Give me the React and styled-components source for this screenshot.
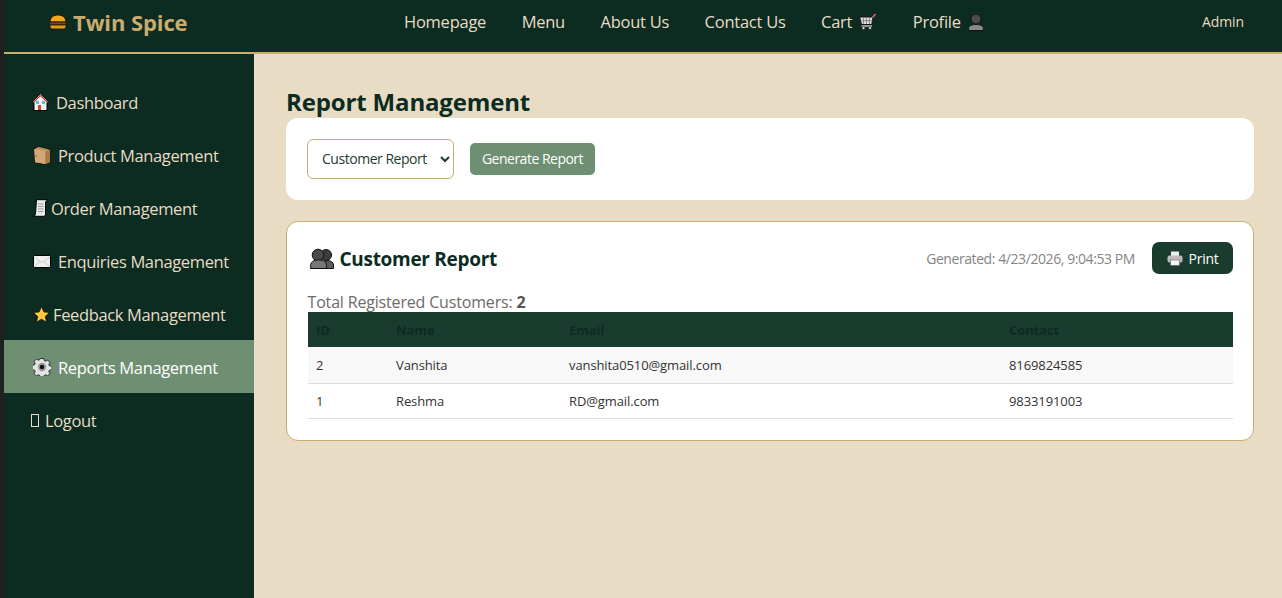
import React from "react";
import styled, { createGlobalStyle } from "styled-components";

const GlobalStyle = createGlobalStyle`
  html, body { margin: 0; padding: 0; height: 100%; }
  body {
    background: #202020;
    font-family: "Open Sans", "Noto Sans", "Liberation Sans", sans-serif;
    overflow: hidden;
  }
  svg { flex: none; display: block; }
`;

const Page = styled.div`
  margin-left: 4px;
  height: 598px;
  display: flex;
  flex-direction: column;
  background: #e8dcc5;
`;

const TopBar = styled.header`
  height: 54px;
  flex: none;
  box-sizing: border-box;
  background: #0c2b21;
  border-bottom: 2px solid #c8ad6e;
  padding-bottom: 9px;
  display: flex;
  align-items: center;
`;

const Brand = styled.div`
  width: 400px;
  box-sizing: border-box;
  padding-left: 45px;
  display: flex;
  align-items: center;
  gap: 6px;
  color: #c8ad6e;
  font-size: 22px;
  font-weight: 700;
  letter-spacing: -0.1px;
`;

const TopLinks = styled.nav`
  display: flex;
  align-items: center;
  gap: 35.5px;
  color: #e8dcc5;
  font-size: 16.5px;
  letter-spacing: -0.25px;
`;

const TopLink = styled.span`
  display: flex;
  align-items: center;
  gap: 7px;
  margin-left: ${(p) => p.$push || 0}px;
`;

const AdminLabel = styled.span`
  margin-left: auto;
  margin-right: 38px;
  color: #e8dcc5;
  font-size: 14px;
  letter-spacing: -0.1px;
`;

const Body = styled.div`
  flex: 1;
  display: flex;
  min-height: 0;
`;

const Sidebar = styled.aside`
  width: 250px;
  flex: none;
  background: #0c2b21;
  padding-top: 21px;
  box-sizing: border-box;
`;

const SideItem = styled.div`
  height: 53px;
  box-sizing: border-box;
  padding: 1px 0 0 ${(p) => p.$indent || 28}px;
  display: flex;
  align-items: center;
  gap: ${(p) => p.$gap}px;
  color: ${(p) => (p.$active ? "#ffffff" : "#e8dcc5")};
  background: ${(p) => (p.$active ? "#6e8f72" : "transparent")};
  font-size: 16.5px;
  letter-spacing: -0.36px;
`;

const Main = styled.main`
  flex: 1;
  padding: 32px 28px 0 32px;
  min-width: 0;
`;

const Title = styled.h1`
  margin: 0;
  color: #0c2b21;
  font-size: 24px;
  line-height: 32px;
  font-weight: 700;
  letter-spacing: -0.15px;
`;

const Controls = styled.section`
  height: 82px;
  box-sizing: border-box;
  background: #fff;
  border-radius: 12px;
  padding: 0 21px;
  display: flex;
  align-items: center;
  gap: 16px;
`;

const ReportSelect = styled.select`
  width: 147px;
  height: 40px;
  box-sizing: border-box;
  padding: 0 10px 1px;
  background: #fff;
  border: 1px solid #c8ad6e;
  border-radius: 6px;
  color: #1f3b30;
  font-family: inherit;
  font-size: 14px;
  letter-spacing: -0.47px;
`;

const GenerateButton = styled.button`
  width: 125px;
  height: 32px;
  padding: 0 0 1px;
  border: 0;
  border-radius: 5px;
  background: #6e8f72;
  color: #fff;
  font-family: inherit;
  font-size: 14px;
  letter-spacing: -0.5px;
`;

const ReportCard = styled.section`
  margin-top: 21px;
  height: 220px;
  box-sizing: border-box;
  background: #fff;
  border: 1px solid #c8ad6e;
  border-radius: 12px;
  padding: 20px 20px 0 20.500px;
`;

const CardHeader = styled.div`
  height: 32px;
  display: flex;
  align-items: center;
`;

const CardTitle = styled.h2`
  margin: 1px 0 0 2px;
  display: flex;
  align-items: center;
  gap: 6px;
  color: #0c2b21;
  font-size: 19px;
  font-weight: 700;
  letter-spacing: -0.3px;
`;

const Generated = styled.span`
  margin-left: auto;
  margin-right: 17px;
  color: #858585;
  font-size: 14px;
  letter-spacing: -0.42px;
`;

const PrintButton = styled.button`
  width: 81px;
  height: 32px;
  border: 0;
  border-radius: 7px;
  background: #1a3c2f;
  color: #fff;
  font-family: inherit;
  font-size: 14px;
  letter-spacing: -0.3px;
  display: flex;
  align-items: center;
  justify-content: center;
  gap: 6px;
`;

const TotalLine = styled.p`
  margin: 18px 0 -1px;
  color: #6b6b6b;
  font-size: 16px;
  line-height: 21px;
  letter-spacing: -0.17px;

  strong {
    color: #555;
  }
`;

const Table = styled.table`
  width: 100%;
  border-collapse: collapse;
  table-layout: fixed;
  font-size: 13px;
  letter-spacing: -0.1px;
`;

const HeadCell = styled.th`
  height: 35px;
  box-sizing: border-box;
  padding: 0 8.500px;
  background: #1a3c2f;
  color: #0c2b21;
  text-align: left;
  font-weight: 700;
  width: ${(p) => (p.$w ? `${p.$w}px` : "auto")};
`;

const Row = styled.tr`
  background: ${(p) => (p.$shade ? "#f8f8f8" : "#fff")};
`;

const Cell = styled.td`
  height: ${(p) => p.$h}px;
  box-sizing: border-box;
  padding: 0 8.500px;
  color: #333;
  border-bottom: 1px solid #ddd;
`;

const Burger = () => (
  <svg width="18" height="16" viewBox="0 0 18 16">
    <path d="M1 8C1 3.500 4.500 1 9 1s8 2.500 8 7z" fill="#f0a818" stroke="#17120a" />
    <rect x="0.500" y="8" width="17" height="3" rx="1.500" fill="#7a4a16" stroke="#17120a" strokeWidth="0.800" />
    <path d="M1 11h16v1.500a2.500 2.500 0 0 1-2.500 2.500h-11A2.500 2.500 0 0 1 1 12.500z" fill="#e09a18" stroke="#17120a" strokeWidth="0.800" />
  </svg>
);

const House = () => (
  <svg width="17" height="18" viewBox="0 0 17 18">
    <path d="M8.500.600.600 8.500 2 9.500V17.500h13V9.500l1.400-1z" fill="#f3f3f3" stroke="#000" />
    <path d="M8.500 1.500 1.500 8.500l1 .8 6-6 6 6 1-.8z" fill="#c0392b" />
    <rect x="4" y="8" width="3" height="3" fill="#4cc0e0" />
    <rect x="10" y="8" width="3" height="3" fill="#4cc0e0" />
    <rect x="6" y="12" width="3" height="5" fill="#d04a3a" />
  </svg>
);

const Box = () => (
  <svg width="18" height="19" viewBox="0 0 18 19">
    <path d="M.700 3 5 .700 17.300 3.500V16.500L12.500 18.500 1.500 16.500z" fill="#c99b6c" stroke="#111" />
    <path d="M1.500 3.300 12.300 5.500V18L2 16.300z" fill="#d3a878" />
    <path d="M12.300 5.500 17 3.800V16.200L12.300 18z" fill="#a87b4e" />
    <path d="M5 1.500 15 4" stroke="#b58a5c" strokeWidth="1.500" />
    <rect x="2.500" y="9" width="1.500" height="2" fill="#e0607a" />
  </svg>
);

const Scroll = () => (
  <svg width="15" height="18" viewBox="0 0 15 18">
    <path d="M3.500.700H14.500L12.500 3V15.500A1.800 1.800 0 0 1 10.700 17.300H.700C2.200 16.800 2.500 15.500 2.500 14.500z" fill="#ececec" stroke="#000" />
    <path d="M5 5h5.500M5 7.500h5.500M5 10h5.500M5 12.500h5.500" stroke="#999" />
  </svg>
);

const Envelope = () => (
  <svg width="18" height="13" viewBox="0 0 18 13">
    <rect x="0.500" y="0.500" width="17" height="12" rx="1" fill="#f0f0f0" stroke="#000" />
    <path d="M1 2l8 5.500L17 2M1 12l6-5.500M17 12l-6-5.500" fill="none" stroke="#c8c8c8" />
  </svg>
);

const Star = () => (
  <svg width="17" height="17" viewBox="0 0 17 17">
    <path d="M8.500.500 10.900 5.900 16.600 6.500 12.300 10.400 13.600 16.200 8.500 13.200 3.400 16.200 4.700 10.400.400 6.500 6.100 5.900z" fill="#ffc83d" stroke="#111" strokeWidth="0.800" />
  </svg>
);

const Gear = () => (
  <svg width="18" height="18" viewBox="0 0 18 18">
    <path
      d="M7.300.500h3.400l.5 2.100 1.500.6 1.900-1.100 2.300 2.300-1.100 1.900.6 1.500 2.100.5v3.400l-2.100.5-.6 1.500 1.100 1.900-2.300 2.300-1.900-1.100-1.500.6-.5 2.100H7.300l-.5-2.100-1.500-.6-1.900 1.100-2.300-2.300 1.100-1.900-.6-1.500-2.100-.5V7.300l2.100-.5.6-1.500-1.100-1.900 2.300-2.300 1.900 1.100 1.500-.6z"
      fill="#e4e4e4"
      stroke="#111"
      strokeWidth="0.800"
    />
    <circle cx="9" cy="9" r="4.200" fill="#999" />
    <circle cx="9" cy="9" r="2.200" fill="#111" />
  </svg>
);

const Cart = () => (
  <svg width="18" height="17" viewBox="0 0 18 17">
    <path d="M.600 4H14L12.800 11.500H2.500z" fill="#ddd" stroke="#111" />
    <path d="M4.500 4.500V11M7.500 4.500V11M10.500 4.500V11M1.500 7.700H13.500" stroke="#777" strokeWidth="0.800" />
    <path d="M13.500 4.500 16.500 1" stroke="#e8667a" strokeWidth="1.500" />
    <path d="M2.500 13H13" stroke="#ddd" strokeWidth="1.300" />
    <circle cx="4.500" cy="15" r="1.500" fill="#ddd" stroke="#111" strokeWidth="0.500" />
    <circle cx="11" cy="15" r="1.500" fill="#ddd" stroke="#111" strokeWidth="0.500" />
  </svg>
);

const Person = () => (
  <svg width="16" height="18" viewBox="0 0 16 18">
    <circle cx="8" cy="6" r="5" fill="#4c4c4c" stroke="#111" />
    <path d="M.600 17.500V15.500C.600 13 3.500 11.500 8 11.500S15.400 13 15.400 15.500V17.500z" fill="#8a8a8a" stroke="#111" />
  </svg>
);

const People = () => (
  <svg width="24" height="21" viewBox="0 0 24 21">
    <circle cx="16" cy="7" r="5.500" fill="#3c3c3c" stroke="#111" />
    <path d="M13 20.500V17C13 14 16 12.500 18 12.500S23.500 14 23.500 17V20.500z" fill="#5c5c5c" stroke="#111" />
    <circle cx="8" cy="7" r="5.800" fill="#4a4a4a" stroke="#111" />
    <path d="M.600 20.500V17.500C.600 14 3.500 12 8.500 12S16.400 14 16.400 17.500V20.500z" fill="#777" stroke="#111" />
  </svg>
);

const Printer = () => (
  <svg width="16" height="15" viewBox="0 0 16 15">
    <rect x="4" y="0.500" width="8" height="5" fill="#eee" />
    <rect x="0.500" y="4.500" width="15" height="7" rx="2" fill="#bbb" />
    <rect x="3.500" y="9" width="9" height="5.500" fill="#f4f4f4" stroke="#555" strokeWidth="0.500" />
  </svg>
);

// tofu box, the glyph the Logout emoji fell back to
const Tofu = styled.span`
  width: 8px;
  height: 13px;
  border: 1px solid #e8dcc5;
  box-sizing: border-box;
  display: inline-block;
`;

const sideItems = [
  { label: "Dashboard", icon: <House />, gap: 7 },
  { label: "Product Management", icon: <Box />, gap: 7, indent: 29 },
  { label: "Order Management", icon: <Scroll />, gap: 3, indent: 29 },
  { label: "Enquiries Management", icon: <Envelope />, gap: 7, indent: 29 },
  { label: "Feedback Management", icon: <Star />, gap: 3, indent: 29 },
  { label: "Reports Management", icon: <Gear />, gap: 7, indent: 29, active: true },
  { label: "Logout", icon: <Tofu />, gap: 6, indent: 27 },
];

const customers = [
  { id: 2, name: "Vanshita", email: "vanshita0510@gmail.com", contact: "8169824585", h: 36 },
  { id: 1, name: "Reshma", email: "RD@gmail.com", contact: "9833191003", h: 35 },
];

const App = () => {
  return (
    <Page>
      <GlobalStyle />
      <TopBar>
        <Brand>
          <Burger />
          Twin Spice
        </Brand>
        <TopLinks>
          <TopLink>Homepage</TopLink>
          <TopLink>Menu</TopLink>
          <TopLink>About Us</TopLink>
          <TopLink>Contact Us</TopLink>
          <TopLink>
            Cart
            <Cart />
          </TopLink>
          <TopLink>
            Profile
            <Person />
          </TopLink>
        </TopLinks>
        <AdminLabel>Admin</AdminLabel>
      </TopBar>
      <Body>
        <Sidebar>
          {sideItems.map((item) => (
            <SideItem
              key={item.label}
              $active={item.active}
              $gap={item.gap}
              $indent={item.indent}
            >
              {item.icon}
              {item.label}
            </SideItem>
          ))}
        </Sidebar>
        <Main>
          <Title>Report Management</Title>
          <Controls>
            <ReportSelect defaultValue="customer">
              <option value="customer">Customer Report</option>
            </ReportSelect>
            <GenerateButton>Generate Report</GenerateButton>
          </Controls>
          <ReportCard>
            <CardHeader>
              <CardTitle>
                <People />
                Customer Report
              </CardTitle>
              <Generated>Generated: 4/23/2026, 9:04:53 PM</Generated>
              <PrintButton>
                <Printer />
                Print
              </PrintButton>
            </CardHeader>
            <TotalLine>
              Total Registered Customers: <strong>2</strong>
            </TotalLine>
            <Table>
              <thead>
                <tr>
                  <HeadCell $w={80}>ID</HeadCell>
                  <HeadCell $w={173}>Name</HeadCell>
                  <HeadCell $w={440}>Email</HeadCell>
                  <HeadCell>Contact</HeadCell>
                </tr>
              </thead>
              <tbody>
                {customers.map((c, i) => (
                  <Row key={c.id} $shade={i === 0}>
                    <Cell $h={c.h}>{c.id}</Cell>
                    <Cell $h={c.h}>{c.name}</Cell>
                    <Cell $h={c.h}>{c.email}</Cell>
                    <Cell $h={c.h}>{c.contact}</Cell>
                  </Row>
                ))}
              </tbody>
            </Table>
          </ReportCard>
        </Main>
      </Body>
    </Page>
  );
};

export default App;
